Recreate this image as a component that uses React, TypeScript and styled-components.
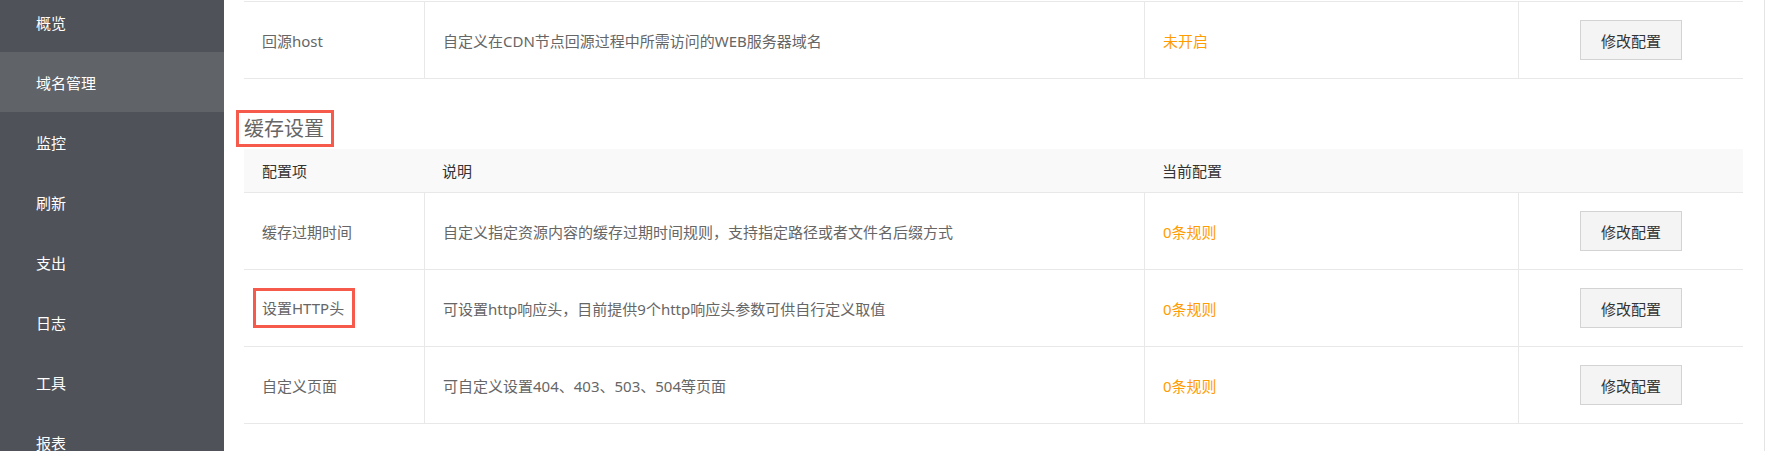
import React from 'react';
import styled, { createGlobalStyle } from 'styled-components';

const GlobalStyle = createGlobalStyle`
  html, body {
    margin: 0;
    padding: 0;
    background: #fff;
  }
  body {
    font-family: "Noto Sans", "Noto Sans CJK SC", sans-serif;
    font-size: 15px;
    color: #666;
  }
`;

const Page = styled.div`
  display: flex;
  width: 1765px;
  height: 451px;
  overflow: hidden;
  box-sizing: border-box;
  border-right: 1px solid #e4e4e4;
`;

const Sidebar = styled.nav`
  width: 224px;
  flex-shrink: 0;
  background: #4f5258;
  display: flex;
  flex-direction: column;
  padding-top: 0;
`;

const NavList = styled.ul`
  list-style: none;
  margin: -8px 0 0;
  padding: 0;
`;

const NavItem = styled.li<{ $active?: boolean }>`
  height: 60px;
  display: flex;
  align-items: center;
  padding-left: 36px;
  color: #fff;
  font-size: 15px;
  background: ${p => (p.$active ? '#606368' : 'transparent')};
`;

const Main = styled.main`
  flex: 1;
  padding: 0 21px 0 20px;
  display: flex;
  flex-direction: column;
`;

const Table = styled.div<{ $top?: boolean }>`
  display: flex;
  flex-direction: column;
  margin-top: ${p => (p.$top ? '1px' : '0')};
  border-top: ${p => (p.$top ? '1px solid #e8e8e8' : 'none')};
`;

const HeadRow = styled.div`
  display: grid;
  grid-template-columns: 180px 720px 374px 1fr;
  height: 43px;
  background: #f9f9f9;
  border-bottom: 1px solid #e8e8e8;
`;

const HeadCell = styled.div`
  display: flex;
  align-items: center;
  padding-left: 18px;
  color: #333;
  font-size: 15px;
`;

const Row = styled.div`
  display: grid;
  grid-template-columns: 180px 720px 374px 1fr;
  height: 76px;
  border-bottom: 1px solid #e8e8e8;
`;

const Cell = styled.div<{ $first?: boolean; $center?: boolean; $accent?: boolean }>`
  box-sizing: border-box;
  display: flex;
  align-items: center;
  justify-content: ${p => (p.$center ? 'center' : 'flex-start')};
  padding-left: ${p => (p.$center ? '0' : '18px')};
  border-left: ${p => (p.$first ? 'none' : '1px solid #e8e8e8')};
  color: ${p => (p.$accent ? '#ff9c00' : '#666')};
  font-size: 15px;
  white-space: nowrap;
`;

const EditButton = styled.button`
  width: 102px;
  height: 40px;
  box-sizing: border-box;
  border: 1px solid #d3d3d3;
  background: #f4f4f4;
  color: #333;
  font-family: inherit;
  font-size: 15px;
  padding: 0;
  cursor: pointer;
`;

const SectionTitle = styled.h3`
  margin: 31px 0 2px -8px;
  align-self: flex-start;
  font-size: 20px;
  font-weight: normal;
  color: #666;
  line-height: 31px;
  height: 31px;
  padding: 0 7px 0 5px;
  border: 3px solid #f55a4a;
`;

const Marked = styled.span`
  display: inline-block;
  margin-left: -9px;
  padding: 7px 8px 7px 6px;
  line-height: 20px;
  border: 3px solid #f55a4a;
`;

type Item = { name: React.ReactNode; desc: string; value: string };

const cacheItems: Item[] = [
  { name: '缓存过期时间', desc: '自定义指定资源内容的缓存过期时间规则，支持指定路径或者文件名后缀方式', value: '0条规则' },
  { name: <Marked>设置HTTP头</Marked>, desc: '可设置http响应头，目前提供9个http响应头参数可供自行定义取值', value: '0条规则' },
  { name: '自定义页面', desc: '可自定义设置404、403、503、504等页面', value: '0条规则' },
];

const navItems = ['概览', '域名管理', '监控', '刷新', '支出', '日志', '工具', '报表'];

function ConfigRow({ item }: { item: Item }): React.ReactElement {
  return (
    <Row>
      <Cell $first>{item.name}</Cell>
      <Cell>{item.desc}</Cell>
      <Cell $accent>{item.value}</Cell>
      <Cell $center>
        <EditButton>修改配置</EditButton>
      </Cell>
    </Row>
  );
}

export default function App(): React.ReactElement {
  return (
    <>
      <GlobalStyle />
      <Page>
        <Sidebar>
          <NavList>
            {navItems.map(n => (
              <NavItem key={n} $active={n === '域名管理'}>{n}</NavItem>
            ))}
          </NavList>
        </Sidebar>
        <Main>
          <Table $top>
            <ConfigRow item={{ name: '回源host', desc: '自定义在CDN节点回源过程中所需访问的WEB服务器域名', value: '未开启' }} />
          </Table>

          <SectionTitle>缓存设置</SectionTitle>
          <Table>
            <HeadRow>
              <HeadCell>配置项</HeadCell>
              <HeadCell>说明</HeadCell>
              <HeadCell>当前配置</HeadCell>
              <HeadCell />
            </HeadRow>
            {cacheItems.map((it, i) => (
              <ConfigRow key={i} item={it} />
            ))}
          </Table>
        </Main>
      </Page>
    </>
  );
}
